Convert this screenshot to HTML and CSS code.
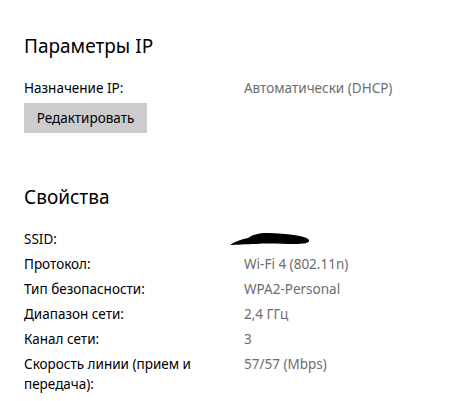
FILE: index.html
```html
<!DOCTYPE html>
<html lang="ru">
<head>
<meta charset="utf-8">
<link rel="stylesheet" href="styles.css">
</head>
<body>
<div class="page">
  <section class="section">
    <h2 class="title">Параметры IP</h2>
    <div class="row">
      <div class="label">Назначение IP:</div>
      <div class="value">Автоматически (DHCP)</div>
    </div>
    <button class="btn">Редактировать</button>
  </section>
  <section class="section props">
    <h2 class="title">Свойства</h2>
    <div class="list">
      <div class="row">
        <div class="label">SSID:</div>
        <div class="value">
          <svg class="scribble" width="84" height="18" viewBox="0 0 84 18">
            <path d="M2 15 C8 11 14 9 20 8 C24 5 30 3 40 3 C50 3 58 4 66 5 C74 6 80 8 81 10 C82 13 76 14 66 14 C54 14 40 13 28 14 C18 14 8 15 2 15 Z" fill="#000"/>
          </svg>
        </div>
      </div>
      <div class="row">
        <div class="label">Протокол:</div>
        <div class="value">Wi-Fi 4 (802.11n)</div>
      </div>
      <div class="row">
        <div class="label">Тип безопасности:</div>
        <div class="value">WPA2-Personal</div>
      </div>
      <div class="row">
        <div class="label">Диапазон сети:</div>
        <div class="value">2,4 ГГц</div>
      </div>
      <div class="row">
        <div class="label">Канал сети:</div>
        <div class="value">3</div>
      </div>
      <div class="row">
        <div class="label">Скорость линии (прием и передача):</div>
        <div class="value">57/57 (Mbps)</div>
      </div>
    </div>
  </section>
</div>
</body>
</html>
```

FILE: styles.css
```css
html, body {
  margin: 0;
  padding: 0;
  background: #ffffff;
  overflow: hidden;
}
body {
  width: 458px;
  height: 401px;
  font-family: "Noto Sans", "Open Sans", sans-serif;
  color: #000;
}
.page {
  padding: 32px 0 0 24px;
}
.title {
  margin: 0;
  font-size: 19px;
  font-weight: 400;
  line-height: 28px;
  color: #000;
}
.section .row {
  margin-top: 18px;
}
.row {
  display: flex;
  font-size: 13.5px;
  line-height: 20px;
}
.label {
  width: 200px;
  flex: none;
  color: #000;
}
.value {
  margin-left: 20px;
  color: #6d6d6d;
  white-space: nowrap;
}
.btn {
  display: block;
  margin-top: 5px;
  width: 123px;
  height: 30px;
  border: none;
  background: #cccccc;
  font-family: inherit;
  font-size: 13.5px;
  color: #000;
  padding: 0;
}
.props {
  margin-top: 50px;
}
.list {
  display: flex;
  flex-direction: column;
  gap: 5px;
  margin-top: 18px;
}
.list .row {
  margin-top: 0;
}
.scribble {
  display: block;
  margin-left: -16px;
  margin-top: 1px;
}
```
